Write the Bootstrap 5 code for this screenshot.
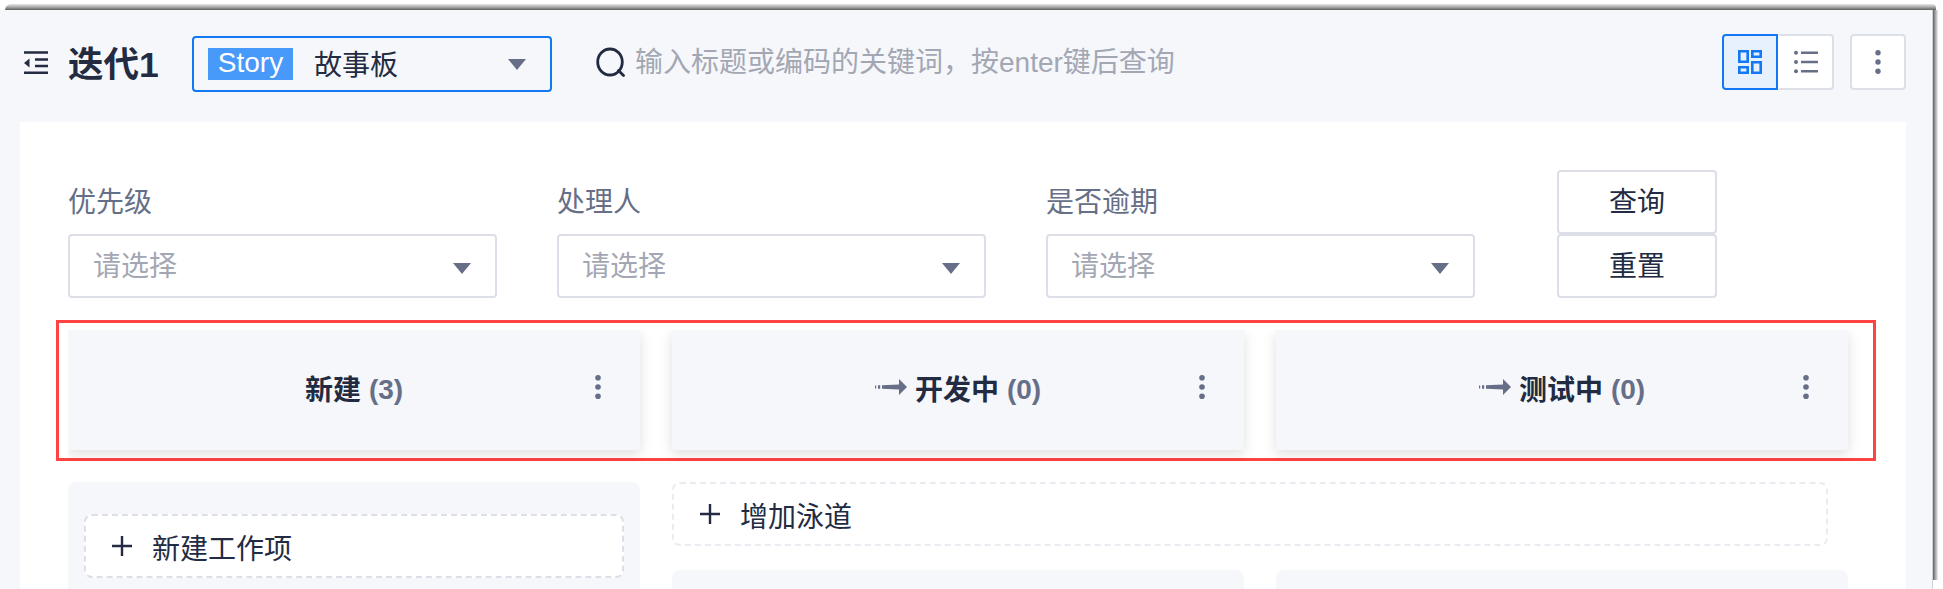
<!DOCTYPE html>
<html lang="zh-CN">
<head>
<meta charset="utf-8">
<meta name="viewport" content="width=device-width, initial-scale=1">
<title>迭代1</title>
<link href="https://cdn.jsdelivr.net/npm/bootstrap@5.3.0/dist/css/bootstrap.min.css" rel="stylesheet">
<style>
:root{--ink:#232b42;--slate:#666f87;--hint:#a3a7b3;--line:#dcdfe8;--soft:#f5f7fb;--brand:#1278f3}
body{height:589px;overflow:hidden;background:#fff;color:var(--ink);font:28px/40px "Liberation Sans","Noto Sans CJK SC",sans-serif}
svg{display:block;flex:none}
.top-edge{height:10px;padding:4px 7px 0 5px}
.top-edge div{height:6px;border-radius:6px 4px 0 0;background:linear-gradient(#e8e8e8,#aaa 50%,#606060)}
.side-edge{width:5px;height:570px;background:linear-gradient(90deg,#606060,#aaa 50%,#eee)}
.app-frame{width:1933px;height:579px;background:var(--soft);border-right:1px solid #d0d1d6}
.toolbar{height:112px;padding:24px 26px 0 24px}
.page-title{font-size:35.5px;line-height:56px;font-weight:700;margin:3px 0 0 20px;width:124px;white-space:nowrap}
.board-select{width:360px;height:56px;margin-top:2px;border:2px solid var(--brand);border-radius:4px;padding:0 24px 0 14px}
.kind{background:#4799fa;color:#fff;height:32px;line-height:30px;width:85px;text-align:center;margin-right:21px}
.search-icon{margin:13px 0 0 44px}
.search-hint{color:var(--hint);margin-left:9px;line-height:57px}
.sq{width:56px;height:56px;border:2px solid var(--line);background:#fff;border-radius:4px;padding:0;color:var(--slate)}
.sq-on{background:#e7f1fe;border-color:var(--brand);color:var(--brand);border-radius:4px 0 0 4px}
.sq-off{border-left-color:#fff0;border-radius:0 4px 4px 0}
.panel{margin:0 26px 0 20px;height:467px;background:#fff;padding:48px 58px 0 48px;overflow:hidden}
.filters{height:128px;gap:60px}
.filter{width:429px}
.filter label{color:var(--slate);height:64px;line-height:66px;display:block}
.pick{height:64px;border:2px solid var(--line);border-radius:4px;padding:0 24px 0 23px;color:var(--hint)}
.pick span{padding-top:2px}
.acts{margin-left:22px;width:160px}
.acts button{height:64px;border:2px solid var(--line);border-radius:4px;background:#fff;color:var(--ink);padding:2px 0 0}
.marked{margin:22px -28px 0 -12px;border:3px solid #ff4242;height:141px;padding:7px 9px}
.lanes{display:grid;grid-template-columns:repeat(3,572px);column-gap:32px}
.two-lanes{grid-template-columns:repeat(2,572px)}
.lane-head{height:120px;background:var(--soft);box-shadow:0 4px 12px rgba(0,0,0,.13);clip-path:inset(0 -16px -30px 0);font-weight:700;position:relative;display:flex;align-items:center;justify-content:center}
.lane-head+.lane-head{clip-path:inset(0 -16px -30px -16px)}
.lane-name{padding-top:2px}
.lane-arrow{margin:0 8px 6px 0}
.count{color:var(--slate);margin-left:8px}
.lane-menu{position:absolute;right:38px;top:45px;color:var(--slate)}
.lower{margin-top:21px;gap:32px}
.lane-body{background:var(--soft);border-radius:8px;height:60px}
.lane-first{width:572px;height:150px;padding:32px 16px}
.add-box{height:64px;border:2px dashed var(--line);border-radius:8px;background:#fff;padding:0 26px;gap:20px}
.add-box span{padding-top:7px}
.add-lane{width:1156px;border-color:#e9ecf1}
</style>
</head>
<body>
<div class="top-edge"><div></div></div>
<div class="d-flex">
<div class="app-frame">
  <header class="toolbar d-flex align-items-start">
    <svg class="mt-3" width="24" height="26" viewBox="0 0 24 26" fill="none" stroke="#232b42" stroke-width="2.4"><path d="M0 2.500h24M11 9.500h13M11 16h13M0 22.700h24"/><path d="M5.500 8.500v9L0 13z" fill="#232b42" stroke="none"/></svg>
    <h1 class="page-title mb-0">迭代1</h1>
    <div class="board-select d-flex align-items-center"><span class="kind">Story</span><span class="pt-1">故事板</span><svg class="ms-auto" width="18" height="11" viewBox="0 0 18 11"><path d="M0 0h18L9 11z" fill="#666f87"/></svg></div>
    <svg class="search-icon" width="30" height="30" viewBox="0 0 30 30" fill="none" stroke="#232b42" stroke-width="2.800" stroke-linecap="round"><ellipse cx="14" cy="15" rx="12.300" ry="13"/><path d="M22.500 23.500l5 5"/></svg>
    <span class="search-hint">输入标题或编码的关键词，按enter键后查询</span>
    <div class="d-flex ms-auto">
      <button class="sq sq-on d-flex align-items-center justify-content-center"><svg width="24" height="24" viewBox="0 0 24 24" fill="none" stroke="currentColor" stroke-width="2.600"><path d="M1.300 1.300h8.400v10.400H1.300zM14.300 1.300h8.400v5.400h-8.400zM1.300 17.300h8.400v5.400H1.300zM14.300 12.300h8.400v10.400h-8.400z"/></svg></button>
      <button class="sq sq-off d-flex align-items-center justify-content-center"><svg width="24" height="24" viewBox="0 0 24 24" fill="currentColor"><circle cx="2" cy="2.700" r="2"/><circle cx="2" cy="12" r="2"/><circle cx="2" cy="21.300" r="2"/><path d="M7 1.400h17V4H7zM7 10.700h17v2.600H7zM7 20h17v2.600H7z"/></svg></button>
      <button class="sq ms-3 d-flex align-items-center justify-content-center"><svg width="6" height="24" viewBox="0 0 6 24" fill="currentColor"><circle cx="3" cy="2.700" r="2.700"/><circle cx="3" cy="12" r="2.700"/><circle cx="3" cy="21.300" r="2.700"/></svg></button>
    </div>
  </header>
  <main class="panel">
    <div class="filters d-flex">
      <div class="filter"><label>优先级</label><div class="pick d-flex align-items-center"><span>请选择</span><svg class="ms-auto mt-1" width="18" height="11" viewBox="0 0 18 11"><path d="M0 0h18L9 11z" fill="#666f87"/></svg></div></div>
      <div class="filter"><label>处理人</label><div class="pick d-flex align-items-center"><span>请选择</span><svg class="ms-auto mt-1" width="18" height="11" viewBox="0 0 18 11"><path d="M0 0h18L9 11z" fill="#666f87"/></svg></div></div>
      <div class="filter"><label>是否逾期</label><div class="pick d-flex align-items-center"><span>请选择</span><svg class="ms-auto mt-1" width="18" height="11" viewBox="0 0 18 11"><path d="M0 0h18L9 11z" fill="#666f87"/></svg></div></div>
      <div class="acts d-flex flex-column"><button>查询</button><button>重置</button></div>
    </div>
    <section class="marked">
      <div class="lanes">
        <div class="lane-head"><span class="lane-name">新建</span><span class="count">(3)</span><svg class="lane-menu" width="8" height="24" viewBox="0 0 8 24" fill="currentColor"><circle cx="4" cy="2.800" r="2.800"/><circle cx="4" cy="12" r="2.800"/><circle cx="4" cy="21.200" r="2.800"/></svg></div>
        <div class="lane-head"><svg class="lane-arrow" width="32" height="16" viewBox="0 0 32 16" fill="#666f87"><path d="M0 6.500h1.200v3H0zM3 6.300h2.200v3.400H3zM7 6.200l17-.7V0l8 8-8 8v-5.500l-17-.7z"/></svg><span class="lane-name">开发中</span><span class="count">(0)</span><svg class="lane-menu" width="8" height="24" viewBox="0 0 8 24" fill="currentColor"><circle cx="4" cy="2.800" r="2.800"/><circle cx="4" cy="12" r="2.800"/><circle cx="4" cy="21.200" r="2.800"/></svg></div>
        <div class="lane-head"><svg class="lane-arrow" width="32" height="16" viewBox="0 0 32 16" fill="#666f87"><path d="M0 6.500h1.200v3H0zM3 6.300h2.200v3.400H3zM7 6.200l17-.7V0l8 8-8 8v-5.500l-17-.7z"/></svg><span class="lane-name">测试中</span><span class="count">(0)</span><svg class="lane-menu" width="8" height="24" viewBox="0 0 8 24" fill="currentColor"><circle cx="4" cy="2.800" r="2.800"/><circle cx="4" cy="12" r="2.800"/><circle cx="4" cy="21.200" r="2.800"/></svg></div>
      </div>
    </section>
    <div class="lower d-flex">
      <div class="lane-body lane-first flex-shrink-0">
        <div class="add-box d-flex align-items-center"><svg width="20" height="20" viewBox="0 0 20 20" stroke="#232b42" stroke-width="2.400"><path d="M0 10h20M10 0v20"/></svg><span>新建工作项</span></div>
      </div>
      <div class="flex-shrink-0">
        <div class="add-box add-lane d-flex align-items-center"><svg width="20" height="20" viewBox="0 0 20 20" stroke="#232b42" stroke-width="2.400"><path d="M0 10h20M10 0v20"/></svg><span>增加泳道</span></div>
        <div class="lanes two-lanes mt-4"><div class="lane-body"></div><div class="lane-body"></div></div>
      </div>
    </div>
  </main>
</div>
<div class="side-edge"></div>
</div>
<script src="https://cdn.jsdelivr.net/npm/bootstrap@5.3.0/dist/js/bootstrap.bundle.min.js"></script>
</body>
</html>
